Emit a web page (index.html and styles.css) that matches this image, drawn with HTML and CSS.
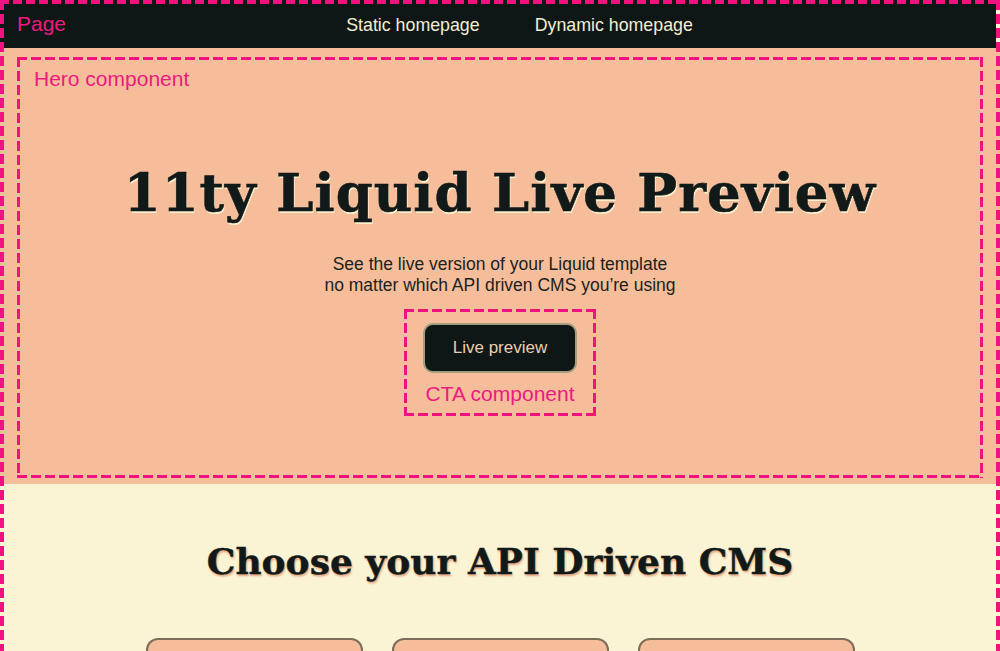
FILE: index.html
```html
<!DOCTYPE html>
<html lang="en">
<head>
<meta charset="utf-8">
<title>11ty Liquid Live Preview</title>
<link rel="stylesheet" href="styles.css">
</head>
<body>
<div class="page outlined outlined-page">
  <span class="tag tag-page">Page</span>
  <nav class="nav">
    <a class="nav-link" href="#">Static homepage</a>
    <a class="nav-link" href="#">Dynamic homepage</a>
  </nav>
  <section class="hero">
    <div class="hero-inner outlined">
      <span class="tag tag-hero">Hero component</span>
      <h1 class="hero-title">11ty Liquid Live Preview</h1>
      <p class="hero-sub">See the live version of your Liquid template<br>no matter which API driven CMS you’re using</p>
      <div class="cta outlined">
        <a class="cta-button" href="#">Live preview</a>
        <span class="tag tag-cta">CTA component</span>
      </div>
    </div>
  </section>
  <section class="choose">
    <h2 class="choose-title">Choose your API Driven CMS</h2>
    <div class="cards">
      <div class="card"></div>
      <div class="card"></div>
      <div class="card"></div>
    </div>
  </section>
</div>
</body>
</html>
```
FILE: styles.css
```css
* { box-sizing: border-box; }
html, body { margin: 0; padding: 0; }
body {
  background: #faf3d4;
  font-family: "Liberation Sans", Arial, sans-serif;
  color: #121a18;
}
.outlined { position: relative; }
.outlined::after {
  content: "";
  position: absolute;
  inset: 0;
  pointer-events: none;
  z-index: 5;
  background:
    repeating-linear-gradient(90deg, #f0137f 0 10px, transparent 10px 14px) left top / 100% 3px no-repeat,
    repeating-linear-gradient(90deg, #f0137f 0 10px, transparent 10px 14px) left bottom / 100% 3px no-repeat,
    repeating-linear-gradient(180deg, #f0137f 0 10px, transparent 10px 14px) left top / 3px 100% no-repeat,
    repeating-linear-gradient(180deg, #f0137f 0 10px, transparent 10px 14px) right top / 3px 100% no-repeat;
}
.outlined-page::after {
  background:
    repeating-linear-gradient(90deg, #f0137f 0 9px, transparent 9px 13px) left top / 100% 4px no-repeat,
    repeating-linear-gradient(180deg, #f0137f 0 10px, transparent 10px 14px) left top / 4px 100% no-repeat,
    repeating-linear-gradient(180deg, #f0137f 0 10px, transparent 10px 14px) right top / 4px 100% no-repeat;
}
.page {
  min-height: 900px;
  background: #faf3d4;
}
.tag {
  color: #ec1a80;
  font-size: 21px;
  line-height: 24px;
  font-family: "Liberation Sans", Arial, sans-serif;
}
.tag-page {
  position: absolute;
  left: 17px;
  top: 12px;
  z-index: 6;
}
.nav {
  height: 48px;
  margin-right: 4px;
  background: #0f1716;
  display: flex;
  justify-content: center;
  align-items: center;
  gap: 55px;
  padding: 2px 0 0 43px;
}
.nav-link {
  color: #f3eed2;
  text-decoration: none;
  font-size: 17.8px;
  font-weight: 500;
}
.hero {
  background: #f6bd9a;
  padding: 9px 17px 6px;
}
.hero-inner {
  height: 421px;
  padding: 10px 17px 0;
  display: flex;
  flex-direction: column;
  align-items: center;
}
.tag-hero {
  align-self: flex-start;
}
.hero-title {
  margin: 71px 0 0;
  font-family: "DejaVu Serif", Georgia, serif;
  font-weight: bold;
  font-size: 53px;
  line-height: 60px;
  letter-spacing: 1px;
  color: #111a18;
  -webkit-text-stroke: 0.6px #111a18;
  text-shadow: 1px 2px 0 #fdf0cf;
}
.hero-sub {
  margin: 32px 0 0;
  text-align: center;
  font-size: 17.5px;
  line-height: 21px;
  color: #1c1f1d;
}
.cta {
  margin-top: 13px;
  width: 192px;
  height: 107px;
  padding: 14px 18px 0;
  display: flex;
  flex-direction: column;
  align-items: center;
}
.cta-button {
  width: 154px;
  height: 50px;
  display: flex;
  align-items: center;
  justify-content: center;
  background: #0f1716;
  border: 2px solid #a39c7e;
  border-radius: 10px;
  color: #ecceae;
  text-decoration: none;
  font-size: 17px;
}
.tag-cta {
  margin-top: 9px;
}
.choose {
  padding-top: 55px;
  display: flex;
  flex-direction: column;
  align-items: center;
}
.choose-title {
  margin: 0;
  font-family: "DejaVu Serif", Georgia, serif;
  font-weight: bold;
  font-size: 36px;
  line-height: 44px;
  color: #111a18;
  -webkit-text-stroke: 0.4px #111a18;
  text-shadow: 1px 2px 2px #e8a27c;
}
.cards {
  margin-top: 55px;
  display: flex;
  gap: 29px;
}
.card {
  width: 217px;
  height: 200px;
  background: #f6bd9a;
  border: 2px solid #7f6c5a;
  border-radius: 12px;
}
```
